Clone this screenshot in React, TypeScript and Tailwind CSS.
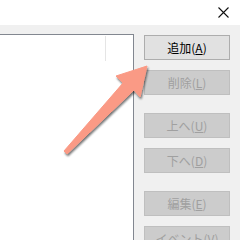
import React from 'react';

interface IButtonProps {
  label: string;
  mnemonic: string;
  disabled?: boolean;
  className?: string;
}

function DialogButton(props: IButtonProps) {
  const base =
    'h-[25px] w-[86px] border flex items-center justify-center text-[12px] leading-none';
  const look = props.disabled
    ? 'bg-[#cccccc] border-[#bfbfbf] text-[#a0a0a0]'
    : 'bg-[#e1e1e1] border-[#adadad] text-black';
  return (
    <div className={`${base} ${look} ${props.className ?? ''}`}>
      <span>
        {props.label}(<u className="underline-offset-1">{props.mnemonic}</u>)
      </span>
    </div>
  );
}

export default function App() {
  return (
    <div
      className="relative w-[240px] h-[240px] overflow-hidden bg-[#f0f0f0]"
      style={{ fontFamily: '"Noto Sans CJK JP", "Noto Sans", sans-serif' }}
    >
      {/* title bar */}
      <div className="h-[25px] bg-white flex items-start justify-end pr-[11px] pt-[7px]">
        <svg width="11" height="11" viewBox="0 0 11 11">
          <path d="M0.5 0.5 L10.5 10.5 M10.5 0.5 L0.5 10.5" stroke="#111" strokeWidth="1.1" />
        </svg>
      </div>

      <div className="flex pt-[9px]">
        {/* list box */}
        <div className="w-[134px] h-[220px] bg-white border-t border-r border-[#828790] flex justify-end pr-[27px] pt-[1px]">
          <div className="w-px h-[25px] bg-[#e5e5e5]"></div>
        </div>

        {/* buttons */}
        <div className="ml-[10px] pt-[1px] flex flex-col">
          <DialogButton label="追加" mnemonic="A" />
          <DialogButton label="削除" mnemonic="L" disabled className="mt-[10px]" />
          <DialogButton label="上へ" mnemonic="U" disabled className="mt-[18px]" />
          <DialogButton label="下へ" mnemonic="D" disabled className="mt-[10px]" />
          <DialogButton label="編集" mnemonic="E" disabled className="mt-[18px]" />
          <DialogButton label="イベント" mnemonic="V" disabled className="mt-[10px]" />
        </div>
      </div>

      {/* annotation arrow */}
      <svg
        className="absolute left-0 top-0 pointer-events-none"
        width="240"
        height="240"
        viewBox="0 0 240 240"
      >
        <defs>
          <filter id="sh" x="-20%" y="-20%" width="140%" height="140%">
            <feGaussianBlur in="SourceAlpha" stdDeviation="1" />
            <feOffset dx="1" dy="1.5" result="b" />
            <feComponentTransfer>
              <feFuncA type="linear" slope="0.55" />
            </feComponentTransfer>
            <feMerge>
              <feMergeNode />
              <feMergeNode in="SourceGraphic" />
            </feMerge>
          </filter>
        </defs>
        <path
          d="M64 151 L123 83 L116 76 L147 66 L140 97 L134 90 L67 154 Z"
          fill="#fa9a85"
          stroke="#fa9a85"
          strokeWidth="1"
          strokeLinejoin="round"
          filter="url(#sh)"
        />
      </svg>
    </div>
  );
}
